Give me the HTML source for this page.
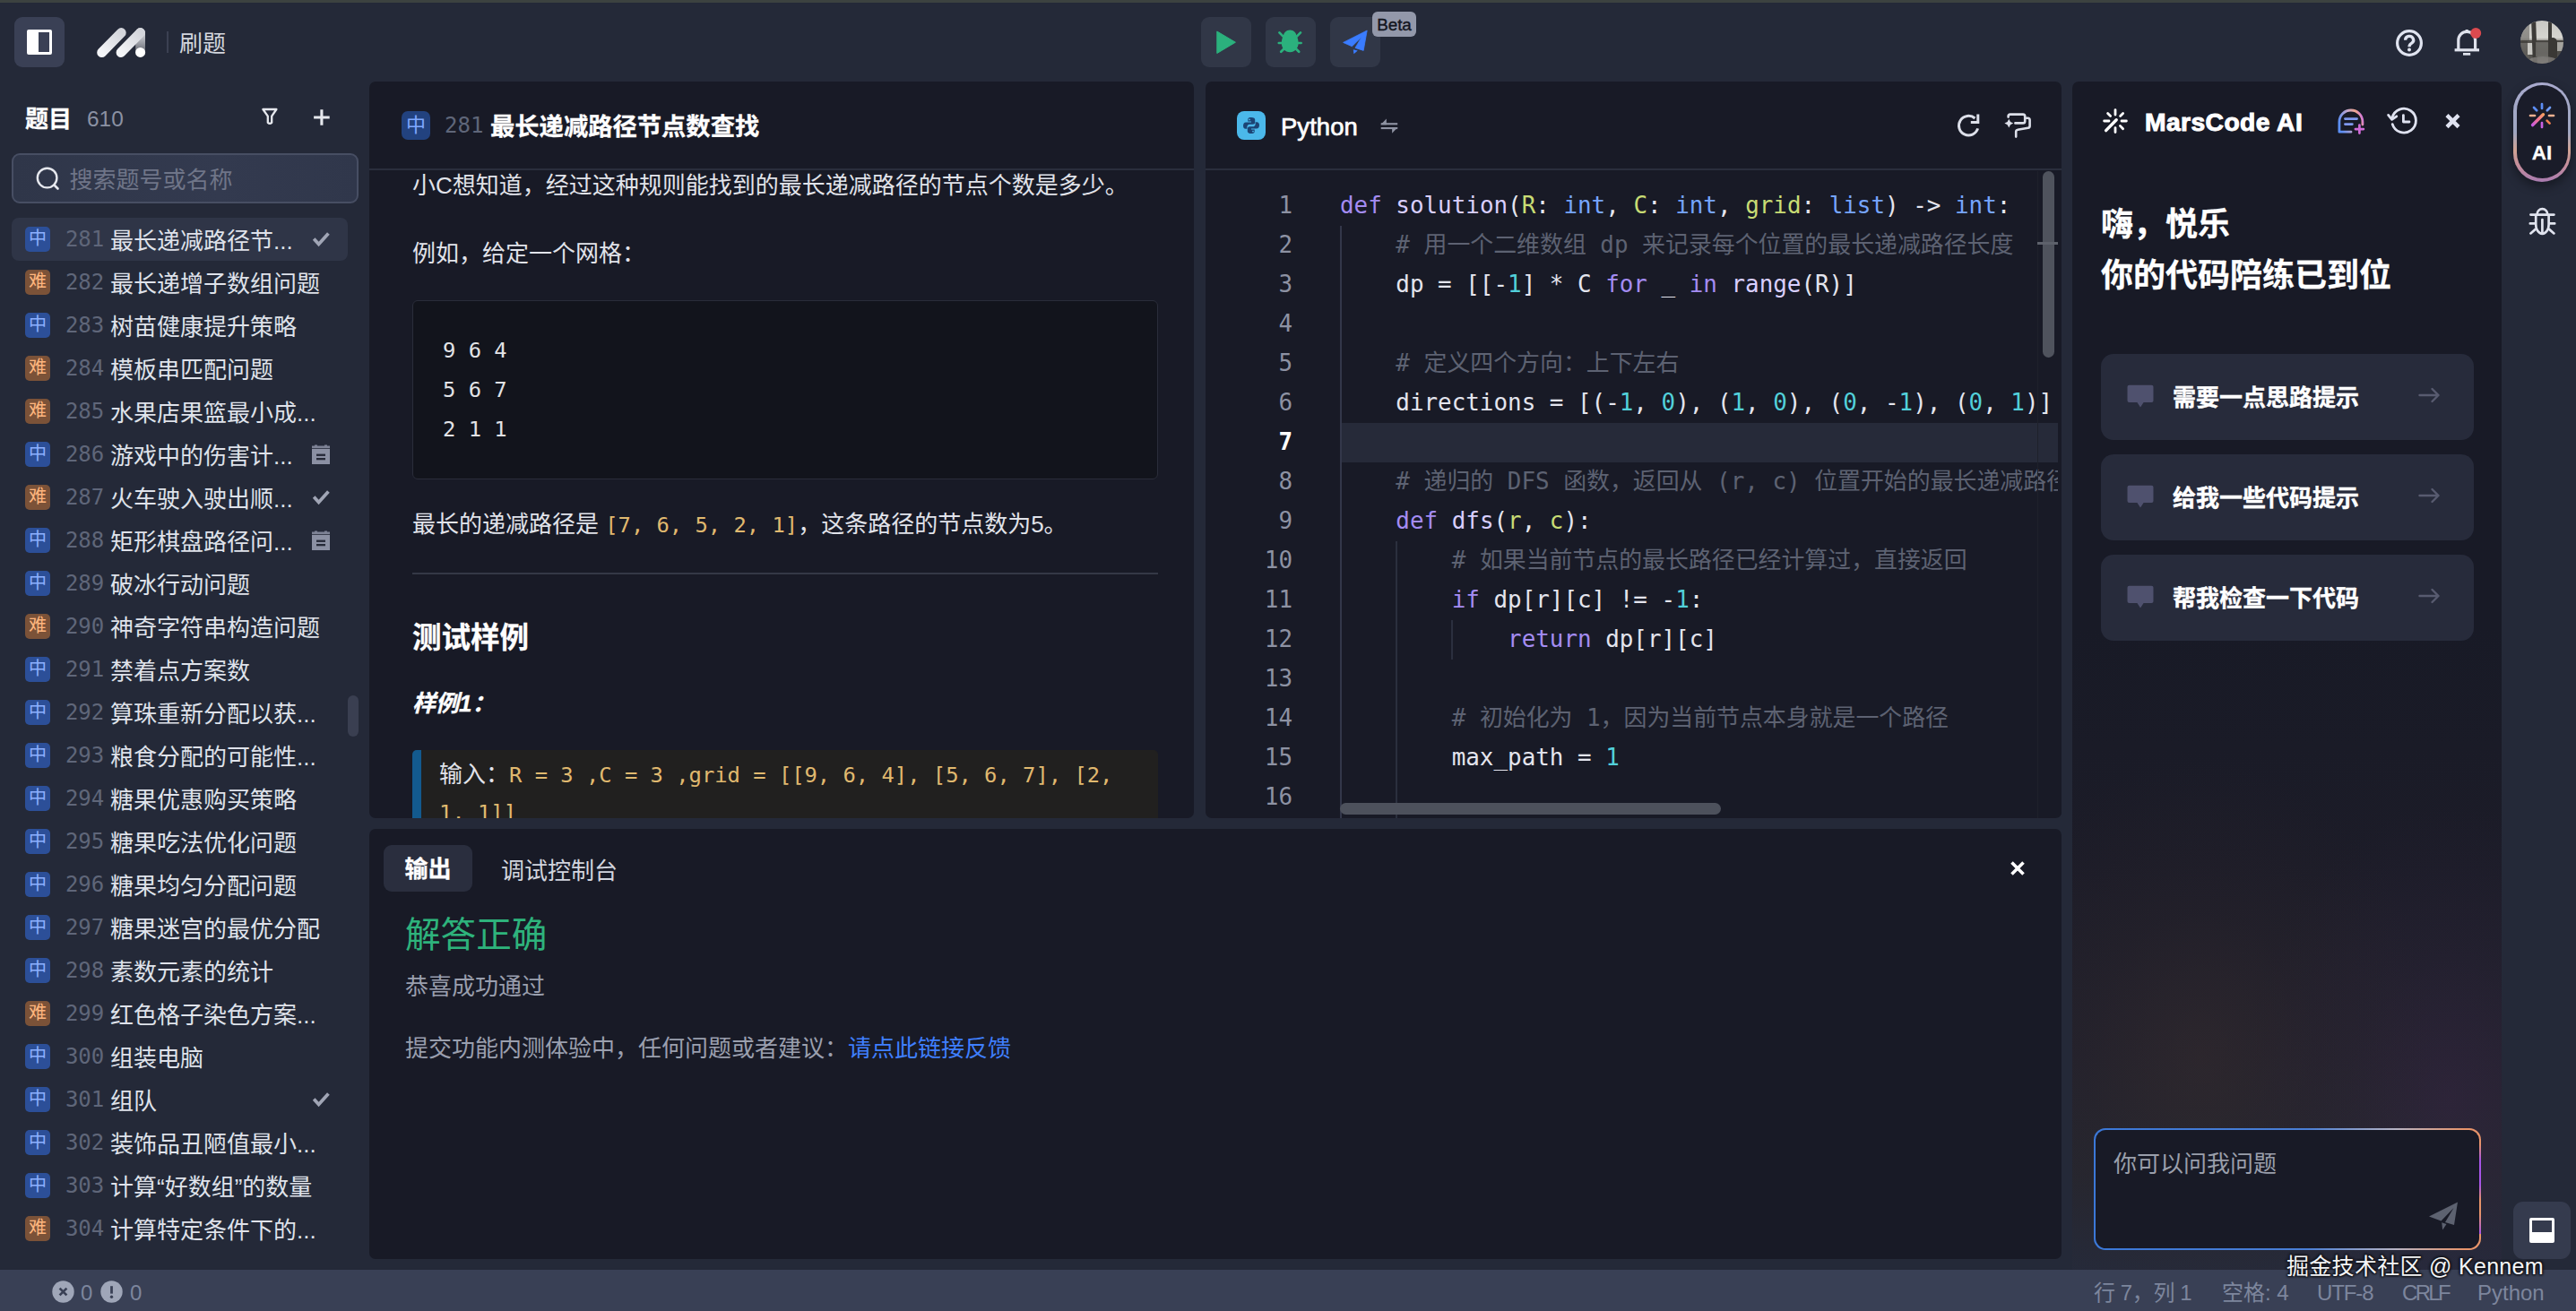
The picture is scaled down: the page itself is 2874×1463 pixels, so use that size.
<!DOCTYPE html>
<html lang="zh-CN">
<head>
<meta charset="utf-8">
<title>刷题 - MarsCode</title>
<style>

*{box-sizing:border-box;margin:0;padding:0}
html,body{width:2874px;height:1463px;overflow:hidden;background:#242938}
body{position:relative;font-family:"Liberation Sans", "Noto Sans CJK SC", sans-serif;color:#e6e8ee;font-size:26px;line-height:1}
.abs{position:absolute}
.panel{position:absolute;background:#181a26;border-radius:7px;overflow:hidden}
.mono{font-family:"DejaVu Sans Mono", "Liberation Mono", "Noto Sans CJK SC", monospace}
.b{font-weight:700;-webkit-text-stroke:.3px currentColor}
.tbtn{position:absolute;top:19px;width:56px;height:56px;border-radius:9px;background:#313747}
.row{position:absolute;left:13px;width:375px;height:48px;border-radius:8px}
.row .bd{position:absolute;left:15px;top:10px;width:28px;height:28px;border-radius:5px;font-size:20px;line-height:27px;text-align:center}
.bd.m{background:#2c4f98;color:#8db0ff}
.bd.h{background:#7b5238;color:#ffb67e}
.row .no{position:absolute;left:60px;top:0.5px;line-height:47px;font-size:24px;color:#5f6679;font-family:"DejaVu Sans Mono", "Liberation Mono", "Noto Sans CJK SC", monospace;letter-spacing:-0.1px}
.row .tt{position:absolute;left:110px;top:3px;line-height:46px;font-size:26px;color:#dfe2ea;white-space:nowrap}
.row svg{position:absolute}
.cl{position:absolute;left:0;width:955px;height:44px;white-space:pre;font-family:"DejaVu Sans Mono", "Liberation Mono", "Noto Sans CJK SC", monospace;font-size:25.9px;line-height:44px;color:#e4e5ee}
.cl .ln{position:absolute;left:0;width:97px;text-align:right;color:#8d92a3}
.cl .tx{position:absolute;left:150px}
.k{color:#a48cf2} .f{color:#d9cfff} .p{color:#c8dc74} .t{color:#76a5ff} .n{color:#52d0da} .c{color:#5d6272}
.card{position:absolute;left:32px;width:416px;height:96px;border-radius:14px;background:#272b3b}
.card .tx{position:absolute;left:80px;top:0;line-height:99px;font-size:26px;font-weight:700;color:#fff;-webkit-text-stroke:.4px #fff}
.st{position:absolute;top:1417px;height:46px;line-height:51px;font-size:24px;color:#7d869d;white-space:nowrap}

</style>
</head>
<body>
<!-- top strip -->
<div class="abs" style="left:0;top:0;width:2874px;height:3px;background:#3c4240"></div>

<!-- ================= TOP BAR ================= -->
<div class="abs" style="left:16px;top:19px;width:56px;height:56px;border-radius:9px;background:#3a4055">
  <div class="abs" style="left:14px;top:14px;width:28px;height:28px;border:3px solid #fff;border-left-width:13px;border-radius:2px"></div>
</div>
<svg class="abs" style="left:104px;top:26px" width="64" height="44" viewBox="104 26 64 44">
  <defs>
    <linearGradient id="lg1" x1="0" y1="1" x2="1" y2="0"><stop offset="0" stop-color="#f4f5f8"/><stop offset="1" stop-color="#d3d5db"/></linearGradient>
    <linearGradient id="lg2" gradientUnits="userSpaceOnUse" x1="156" y1="34" x2="156" y2="60"><stop offset="0" stop-color="#d6d7dc"/><stop offset=".35" stop-color="#b4b6bd"/><stop offset="1" stop-color="#5e616a"/></linearGradient>
  </defs>
  <line x1="156.6" y1="36.5" x2="156.6" y2="58" stroke="url(#lg2)" stroke-width="10.8" stroke-linecap="round"/>
  <line x1="113.6" y1="58.6" x2="135.3" y2="36.5" stroke="url(#lg1)" stroke-width="10.8" stroke-linecap="round"/>
  <line x1="135" y1="58.6" x2="156.6" y2="36.5" stroke="url(#lg1)" stroke-width="10.8" stroke-linecap="round"/>
  <circle cx="156.6" cy="58.4" r="5.5" fill="#fff"/>
</svg>
<div class="abs" style="left:186px;top:35px;width:2px;height:24px;background:#3b4052"></div>
<div class="abs" style="left:200px;top:32px;font-size:26px;line-height:34px;color:#d3d6de">刷题</div>

<!-- run / debug / submit -->
<div class="tbtn" style="left:1340px"><svg class="abs" style="left:16px;top:14px" width="24" height="28" viewBox="1356 33 24 28"><path d="M1357.8 35 L1378.4 47.2 L1357.8 59.5 Z" fill="#2bb17d" stroke="#2bb17d" stroke-width="1" stroke-linejoin="round"/></svg></div>
<div class="tbtn" style="left:1412px"><svg class="abs" style="left:12px;top:12px" width="32" height="32" viewBox="1424 31 32 32">
  <g fill="none" stroke="#2bb17d" stroke-width="2.7" stroke-linecap="round"><path d="M1432.6 41.6 L1427.4 36.4 M1445.8 41.6 L1451 36.4 M1431.5 48 H1426.8 M1447 48 H1451.6 M1433 54 L1429.2 57.8 M1445.4 54 L1449.2 57.8"/></g>
  <path d="M1439.2 33.6 C1443.6 33.6 1446 36.6 1446.6 40.2 C1448 42.6 1448.6 45.4 1448.6 48 C1448.6 54 1444.6 58.2 1439.2 58.2 C1433.8 58.2 1429.8 54 1429.8 48 C1429.8 45.4 1430.4 42.6 1431.8 40.2 C1432.4 36.6 1434.8 33.6 1439.2 33.6 Z" fill="#2bb17d"/>
</svg></div>
<div class="tbtn" style="left:1484px"><svg class="abs" style="left:12px;top:12px" width="32" height="32" viewBox="1496 31 32 32">
  <path d="M1498.6 47.4 L1525.2 34 L1521.2 56.4 L1512 53.4 L1519 41.5 L1508.4 51.8 Z" fill="#3a7cff" stroke="#3a7cff" stroke-width=".8" stroke-linejoin="round"/>
  <path d="M1509.8 55.2 L1514.8 56.6 L1510.4 60.2 Z" fill="#3a7cff"/>
</svg></div>
<div class="abs" style="left:1531px;top:13px;width:49px;height:28px;border-radius:6px;background:#9398aa;color:#14161f;font-size:18.8px;line-height:30px;-webkit-text-stroke:.4px #14161f;text-align:center">Beta</div>

<!-- right icons -->
<svg class="abs" style="left:2668px;top:28px" width="40" height="40" viewBox="2668 28 40 40">
  <circle cx="2688" cy="48" r="13.4" fill="none" stroke="#e0e4f0" stroke-width="3.2"/>
  <path d="M2683.6 44.8 A4.5 4.3 0 1 1 2690.4 48.4 C2688.6 49.5 2688 50.3 2688 52.2" fill="none" stroke="#e0e4f0" stroke-width="3.3"/>
  <circle cx="2688" cy="55.6" r="2" fill="#e0e4f0"/>
</svg>
<svg class="abs" style="left:2730px;top:26px" width="44" height="44" viewBox="2730 26 44 44">
  <path d="M2742.8 55.6 V45 A9.4 9.6 0 0 1 2761.6 45 V55.6" fill="none" stroke="#dfe2ec" stroke-width="3.2"/>
  <path d="M2738.6 55.8 H2766" stroke="#dfe2ec" stroke-width="3.2"/>
  <rect x="2750.6" y="33" width="3.2" height="3" fill="#dfe2ec"/>
  <rect x="2748" y="59" width="8.2" height="2.7" fill="#dfe2ec"/>
  <circle cx="2762.2" cy="37" r="6" fill="#dc4a4f"/>
</svg>
<div class="abs" style="left:2812px;top:23px;width:48px;height:48px;border-radius:50%;overflow:hidden;background:linear-gradient(180deg,#c9c8c3 0,#d6d5d0 40%,#8f8d88 47%,#55534f 52%,#4a4845 75%,#6a6864 100%)">
  <div class="abs" style="left:0;top:0;width:10px;height:48px;background:linear-gradient(180deg,#8a8884 0,#5a5854 100%);opacity:.75"></div>
  <div class="abs" style="left:8px;top:23px;width:7px;height:15px;background:#c9c8c3"></div>
  <div class="abs" style="left:13px;top:0;width:4.6px;height:48px;background:#3d3b38;transform:rotate(-2deg)"></div>
  <div class="abs" style="left:30.5px;top:0;width:4.4px;height:48px;background:#3b3936"></div>
  <div class="abs" style="left:0;top:21.5px;width:48px;height:3px;background:#3f3d3a;opacity:.85"></div>
  <div class="abs" style="left:17px;top:24px;width:14px;height:16px;background:#75736f;opacity:.7"></div>
  <div class="abs" style="left:31px;top:19px;width:10px;height:26px;border-radius:5px 5px 0 0;background:#3a3835"></div>
  <div class="abs" style="left:41px;top:24px;width:7px;height:10px;background:#b9b8b3;opacity:.8"></div>
  <div class="abs" style="left:10px;top:40px;width:30px;height:8px;background:#8a8884;opacity:.7;border-radius:50%"></div>
</div>

<!-- ================= SIDEBAR ================= -->
<div class="abs b" style="left:28px;top:115px;font-size:26px;line-height:36px;color:#fff">题目</div>
<div class="abs" style="left:97px;top:115px;font-size:24.4px;line-height:36px;color:#8b91a3">610</div>
<svg class="abs" style="left:289px;top:118px" width="24" height="24" viewBox="289 118 24 24"><path d="M293.4 122 H308.4 L303.2 129.6 V136.8 Q301 138.6 298.8 136.8 V129.6 Z" fill="none" stroke="#e6e8ee" stroke-width="2.3" stroke-linejoin="round"/></svg>
<svg class="abs" style="left:349px;top:121px" width="20" height="20" viewBox="0 0 20 20"><path d="M9.9 1.2 V18.8 M1.1 10 H18.7" stroke="#e6e8ee" stroke-width="3.1"/></svg>
<div class="abs" style="left:12.5px;top:171px;width:387px;height:55.5px;border-radius:9px;background:linear-gradient(90deg,#2f3649 0,#333a4f 60%,#30374b 100%);border:2px solid #474e63">
  <svg class="abs" style="left:24.5px;top:12px" width="30" height="30" viewBox="0 0 30 30"><circle cx="13.6" cy="13.6" r="10.8" fill="none" stroke="#e6e8ee" stroke-width="2.4"/><path d="M21.5 21.5 L25.5 25.5" stroke="#e6e8ee" stroke-width="2.6" stroke-linecap="round"/></svg>
  <div class="abs" style="left:63px;top:9px;font-size:26px;line-height:38px;color:#6f7588;white-space:nowrap">搜索题号或名称</div>
</div>
<div class="row" style="top:243px;background:#2f3547"><span class="bd m">中</span><span class="no">281</span><span class="tt">最长递减路径节...</span><svg style="left:334px;top:14px" width="22" height="20" viewBox="0 0 22 20"><path d="M3.2 9.6 L8.6 15.6 L19.4 3.6" fill="none" stroke="#a0a5b5" stroke-width="3.7" stroke-linecap="butt" stroke-linejoin="miter"/></svg></div>
<div class="row" style="top:291px"><span class="bd h">难</span><span class="no">282</span><span class="tt">最长递增子数组问题</span></div>
<div class="row" style="top:339px"><span class="bd m">中</span><span class="no">283</span><span class="tt">树苗健康提升策略</span></div>
<div class="row" style="top:387px"><span class="bd h">难</span><span class="no">284</span><span class="tt">模板串匹配问题</span></div>
<div class="row" style="top:435px"><span class="bd h">难</span><span class="no">285</span><span class="tt">水果店果篮最小成...</span></div>
<div class="row" style="top:483px"><span class="bd m">中</span><span class="no">286</span><span class="tt">游戏中的伤害计...</span><svg style="left:333px;top:12px" width="24" height="24" viewBox="0 0 24 24"><path d="M2 6 H22 V23 H2 Z" fill="#8b90a3"/><path d="M2 2.6 H5 V1.4 H8 V2.6 H16 V1.4 H19 V2.6 H22 V5.2 H2 Z" fill="#7d8295"/><rect x="7" y="11.6" width="10" height="2.3" fill="#252937"/><rect x="7" y="16" width="10" height="2.3" fill="#252937"/></svg></div>
<div class="row" style="top:531px"><span class="bd h">难</span><span class="no">287</span><span class="tt">火车驶入驶出顺...</span><svg style="left:334px;top:14px" width="22" height="20" viewBox="0 0 22 20"><path d="M3.2 9.6 L8.6 15.6 L19.4 3.6" fill="none" stroke="#a0a5b5" stroke-width="3.7" stroke-linecap="butt" stroke-linejoin="miter"/></svg></div>
<div class="row" style="top:579px"><span class="bd m">中</span><span class="no">288</span><span class="tt">矩形棋盘路径问...</span><svg style="left:333px;top:12px" width="24" height="24" viewBox="0 0 24 24"><path d="M2 6 H22 V23 H2 Z" fill="#8b90a3"/><path d="M2 2.6 H5 V1.4 H8 V2.6 H16 V1.4 H19 V2.6 H22 V5.2 H2 Z" fill="#7d8295"/><rect x="7" y="11.6" width="10" height="2.3" fill="#252937"/><rect x="7" y="16" width="10" height="2.3" fill="#252937"/></svg></div>
<div class="row" style="top:627px"><span class="bd m">中</span><span class="no">289</span><span class="tt">破冰行动问题</span></div>
<div class="row" style="top:675px"><span class="bd h">难</span><span class="no">290</span><span class="tt">神奇字符串构造问题</span></div>
<div class="row" style="top:723px"><span class="bd m">中</span><span class="no">291</span><span class="tt">禁着点方案数</span></div>
<div class="row" style="top:771px"><span class="bd m">中</span><span class="no">292</span><span class="tt">算珠重新分配以获...</span></div>
<div class="row" style="top:819px"><span class="bd m">中</span><span class="no">293</span><span class="tt">粮食分配的可能性...</span></div>
<div class="row" style="top:867px"><span class="bd m">中</span><span class="no">294</span><span class="tt">糖果优惠购买策略</span></div>
<div class="row" style="top:915px"><span class="bd m">中</span><span class="no">295</span><span class="tt">糖果吃法优化问题</span></div>
<div class="row" style="top:963px"><span class="bd m">中</span><span class="no">296</span><span class="tt">糖果均匀分配问题</span></div>
<div class="row" style="top:1011px"><span class="bd m">中</span><span class="no">297</span><span class="tt">糖果迷宫的最优分配</span></div>
<div class="row" style="top:1059px"><span class="bd m">中</span><span class="no">298</span><span class="tt">素数元素的统计</span></div>
<div class="row" style="top:1107px"><span class="bd h">难</span><span class="no">299</span><span class="tt">红色格子染色方案...</span></div>
<div class="row" style="top:1155px"><span class="bd m">中</span><span class="no">300</span><span class="tt">组装电脑</span></div>
<div class="row" style="top:1203px"><span class="bd m">中</span><span class="no">301</span><span class="tt">组队</span><svg style="left:334px;top:14px" width="22" height="20" viewBox="0 0 22 20"><path d="M3.2 9.6 L8.6 15.6 L19.4 3.6" fill="none" stroke="#a0a5b5" stroke-width="3.7" stroke-linecap="butt" stroke-linejoin="miter"/></svg></div>
<div class="row" style="top:1251px"><span class="bd m">中</span><span class="no">302</span><span class="tt">装饰品丑陋值最小...</span></div>
<div class="row" style="top:1299px"><span class="bd m">中</span><span class="no">303</span><span class="tt">计算“好数组”的数量</span></div>
<div class="row" style="top:1347px"><span class="bd h">难</span><span class="no">304</span><span class="tt">计算特定条件下的...</span></div>
<div class="abs" style="left:388px;top:776px;width:12px;height:46px;border-radius:6px;background:#3a3f51"></div>

<!-- ================= PROBLEM PANEL ================= -->
<div class="panel" style="left:412px;top:91px;width:920px;height:822px">
  <div class="abs" style="left:0;top:0;width:920px;height:99px;border-bottom:2px solid #2a2e3c"></div>
  <div class="abs" style="left:36px;top:33px;width:32px;height:32px;border-radius:7px;background:#22427f;color:#7fa8ff;font-size:22px;line-height:31px;text-align:center">中</div>
  <div class="abs mono" style="left:84px;top:31px;font-size:24px;line-height:36px;color:#5f6679">281</div>
  <div class="abs b" style="left:135px;top:31px;font-size:27.3px;line-height:40px;color:#fff;white-space:nowrap">最长递减路径节点数查找</div>

  <div class="abs" style="left:0;top:100px;width:920px;height:722px;overflow:hidden">
    <div class="abs" style="left:48px;top:-4px;font-size:26px;line-height:40px;color:#e1e3ea;white-space:nowrap">小C想知道，经过这种规则能找到的最长递减路径的节点个数是多少。</div>
    <div class="abs" style="left:48px;top:72px;font-size:26px;line-height:40px;color:#e1e3ea;white-space:nowrap">例如，给定一个网格：</div>
    <div class="abs" style="left:48px;top:144px;width:832px;height:200px;border-radius:6px;background:#12141c;border:1.5px solid #2a2d3a">
      <pre class="abs mono" style="left:33px;top:34px;font-size:23.8px;line-height:43.8px;color:#e2e3e6">9 6 4
5 6 7
2 1 1</pre>
    </div>
    <div class="abs" style="left:48px;top:374px;font-size:26px;line-height:40px;color:#e1e3ea;white-space:nowrap">最长的递减路径是 <span class="mono" style="font-size:23.8px;color:#e0b96f">[7, 6, 5, 2, 1]</span>，这条路径的节点数为5。</div>
    <div class="abs" style="left:48px;top:448px;width:832px;height:2px;background:#343846"></div>
    <div class="abs b" style="left:48px;top:497px;font-size:32.5px;line-height:48px;color:#fff;white-space:nowrap">测试样例</div>
    <div class="abs b" style="left:48px;top:574px;font-size:26px;line-height:40px;color:#fff;white-space:nowrap;font-style:italic">样例1：</div>
    <div class="abs" style="left:48px;top:646px;width:832px;height:130px;background:#21201f;border-left:10px solid #135a8e;border-radius:5px 5px 0 0">
      <div class="abs" style="left:20px;top:7px;width:790px;font-size:26px;line-height:41.4px;color:#e1e3ea">输入：<span class="mono" style="font-size:23.8px;color:#e0b96f">R = 3 ,C = 3 ,grid = [[9, 6, 4], [5, 6, 7], [2, 1, 1]]</span></div>
    </div>
  </div>
</div>

<!-- ================= EDITOR PANEL ================= -->
<div class="panel" style="left:1345px;top:91px;width:955px;height:822px">
  <div class="abs" style="left:0;top:0;width:955px;height:99px;border-bottom:2px solid #2a2e3c"></div>
  <div class="abs" style="left:35px;top:33px;width:32px;height:32px;border-radius:8px;background:#4bb8ea">
    <svg class="abs" style="left:6px;top:6px" width="20" height="20" viewBox="0 0 20 20">
      <path d="M9.8 1 C6.6 1 6.3 2.4 6.3 3.6 V5.6 H10 V6.4 H4 C2.2 6.4 1 7.8 1 10.2 C1 12.6 2.1 13.8 3.7 13.8 H5.4 V11.6 C5.4 10 6.7 8.7 8.3 8.7 H11.9 C13.2 8.7 14.2 7.7 14.2 6.4 V3.6 C14.2 2.2 13 1 9.8 1 Z" fill="#1c4474"/>
      <path d="M10.2 19 C13.4 19 13.7 17.6 13.7 16.4 V14.4 H10 V13.6 H16 C17.8 13.6 19 12.2 19 9.8 C19 7.4 17.9 6.2 16.3 6.2 H14.6 V8.4 C14.6 10 13.3 11.3 11.7 11.3 H8.1 C6.8 11.3 5.8 12.3 5.8 13.6 V16.4 C5.8 17.8 7 19 10.2 19 Z" fill="#1c4474"/>
      <circle cx="8" cy="3.4" r="0.9" fill="#4bb8ea"/><circle cx="12" cy="16.6" r="0.9" fill="#4bb8ea"/>
    </svg>
  </div>
  <div class="abs" style="left:84px;top:31px;font-size:27.4px;line-height:40px;color:#fff;white-space:nowrap;-webkit-text-stroke:0.7px #fff;letter-spacing:0.1px">Python</div>
  <svg class="abs" style="left:190px;top:34px" width="30" height="30" viewBox="1535 125 30 30"><g fill="#8f93a3"><rect x="1540.7" y="137.2" width="18.5" height="2.1"/><path d="M1540.4 139.3 L1546.8 132.6 V139.3 Z"/><rect x="1540.7" y="142" width="18.5" height="2.1"/><path d="M1559.5 142 L1553.1 148.7 V142 Z"/></g></svg>
  <svg class="abs" style="left:835px;top:29px" width="40" height="40" viewBox="2180 120 40 40"><path d="M2206.6 143.4 A10.8 10.8 0 1 1 2203.4 132" fill="none" stroke="#dcdfe9" stroke-width="3"/><path d="M2206.8 127.6 V136.4 H2198.8" fill="none" stroke="#dcdfe9" stroke-width="3"/></svg>
  <svg class="abs" style="left:888px;top:29px" width="40" height="40" viewBox="2233 120 40 40">
    <path d="M2240.6 130.6 V129.8 Q2240.6 127.6 2242.8 127.6 H2257 Q2259.2 127.6 2259.2 129.8 V135.2 Q2259.2 137.4 2257 137.4 H2248.4" fill="none" stroke="#dcdfe9" stroke-width="2.6" stroke-linecap="round"/>
    <path d="M2259.2 131.8 H2262.4 Q2264.6 131.8 2264.6 134 V140.4 Q2264.6 142.4 2262.6 142.7 L2251.2 144.7 Q2249.2 145 2249.2 147 V152.6" fill="none" stroke="#dcdfe9" stroke-width="2.6" stroke-linecap="round"/>
    <path d="M2241.3 132.8 L2243 136 L2246.2 137.6 L2243 139.2 L2241.3 142.6 L2239.6 139.2 L2236.4 137.6 L2239.6 136 Z" fill="#dcdfe9"/>
  </svg>

  <div class="abs" style="left:0;top:100px;width:955px;height:722px;overflow:hidden">
    <!-- current line -->
    <div class="abs" style="left:150px;top:281px;width:801px;height:44px;background:#262a39;border-left:1.5px solid #3a3e4e"></div>
    <!-- indent guides -->
    <div class="abs" style="left:150px;top:61px;width:1.5px;height:661px;background:#33374a"></div>
    <div class="abs" style="left:212px;top:413px;width:1.5px;height:309px;background:#2b2f3e"></div>
    <div class="abs" style="left:274px;top:501px;width:1.5px;height:44px;background:#2b2f3e"></div>
<div class="cl" style="top:16px"><span class="ln">1</span><span class="tx"><span class="k">def</span> <span class="f">solution</span>(<span class="p">R</span>: <span class="t">int</span>, <span class="p">C</span>: <span class="t">int</span>, <span class="p">grid</span>: <span class="t">list</span>) -&gt; <span class="t">int</span>:</span></div>
<div class="cl" style="top:60px"><span class="ln">2</span><span class="tx">    <span class="c"># 用一个二维数组 dp 来记录每个位置的最长递减路径长度</span></span></div>
<div class="cl" style="top:104px"><span class="ln">3</span><span class="tx">    dp = [[-<span class="n">1</span>] * C <span class="k">for</span> _ <span class="k">in</span> <span class="f">range</span>(R)]</span></div>
<div class="cl" style="top:148px"><span class="ln">4</span><span class="tx"></span></div>
<div class="cl" style="top:192px"><span class="ln">5</span><span class="tx">    <span class="c"># 定义四个方向：上下左右</span></span></div>
<div class="cl" style="top:236px"><span class="ln">6</span><span class="tx">    directions = [(-<span class="n">1</span>, <span class="n">0</span>), (<span class="n">1</span>, <span class="n">0</span>), (<span class="n">0</span>, -<span class="n">1</span>), (<span class="n">0</span>, <span class="n">1</span>)]</span></div>
<div class="cl" style="top:280px"><span class="ln" style="color:#fff;font-weight:700">7</span><span class="tx"></span></div>
<div class="cl" style="top:324px"><span class="ln">8</span><span class="tx">    <span class="c"># 递归的 DFS 函数，返回从 (r, c) 位置开始的最长递减路径长度</span></span></div>
<div class="cl" style="top:368px"><span class="ln">9</span><span class="tx">    <span class="k">def</span> <span class="f">dfs</span>(<span class="p">r</span>, <span class="p">c</span>):</span></div>
<div class="cl" style="top:412px"><span class="ln">10</span><span class="tx">        <span class="c"># 如果当前节点的最长路径已经计算过，直接返回</span></span></div>
<div class="cl" style="top:456px"><span class="ln">11</span><span class="tx">        <span class="k">if</span> dp[r][c] != -<span class="n">1</span>:</span></div>
<div class="cl" style="top:500px"><span class="ln">12</span><span class="tx">            <span class="k">return</span> dp[r][c]</span></div>
<div class="cl" style="top:544px"><span class="ln">13</span><span class="tx"></span></div>
<div class="cl" style="top:588px"><span class="ln">14</span><span class="tx">        <span class="c"># 初始化为 1，因为当前节点本身就是一个路径</span></span></div>
<div class="cl" style="top:632px"><span class="ln">15</span><span class="tx">        max_path = <span class="n">1</span></span></div>
<div class="cl" style="top:676px"><span class="ln">16</span><span class="tx"></span></div>
    <!-- scrollbars -->
    <div class="abs" style="left:951px;top:0;width:4px;height:722px;background:#181a26"></div>
    <div class="abs" style="left:927.5px;top:0;width:1.5px;height:722px;background:#1e212b"></div>
    <div class="abs" style="left:933.5px;top:0;width:13.5px;height:208px;border-radius:7px;background:#4f535d"></div>
    <div class="abs" style="left:928px;top:78.5px;width:23px;height:3px;background:#5d616b"></div>
    <div class="abs" style="left:150px;top:705px;width:425px;height:13px;border-radius:6.5px;background:#4d515c"></div>
  </div>
</div>

<!-- ================= OUTPUT PANEL ================= -->
<div class="panel" style="left:412px;top:925px;width:1888px;height:480px">
  <div class="abs b" style="left:16px;top:18px;width:99px;height:52px;border-radius:9px;background:#2a2e3e;color:#fff;font-size:26px;line-height:55px;text-align:center">输出</div>
  <div class="abs" style="left:147px;top:20.5px;font-size:26px;line-height:52px;color:#d2d5de;white-space:nowrap">调试控制台</div>
  <svg class="abs" style="left:1830px;top:35px" width="18" height="18" viewBox="0 0 18 18"><path d="M2.5 2.5 L15.5 15.5 M15.5 2.5 L2.5 15.5" stroke="#fff" stroke-width="3.6" stroke-linecap="butt"/></svg>
  <div class="abs" style="left:40px;top:89.5px;font-size:39.6px;line-height:56px;color:#2eb37c;white-space:nowrap">解答正确</div>
  <div class="abs" style="left:40px;top:156px;font-size:26px;line-height:40px;color:#9a9fae;white-space:nowrap">恭喜成功通过</div>
  <div class="abs" style="left:40px;top:225px;font-size:26px;line-height:40px;color:#9a9fae;white-space:nowrap">提交功能内测体验中，任何问题或者建议：<span style="color:#3f7fff">请点此链接反馈</span></div>
</div>

<!-- ================= AI PANEL ================= -->
<div class="abs" style="left:2312px;top:91px;width:479px;height:1326px;border-radius:7px 7px 0 0;overflow:hidden;background:linear-gradient(180deg,#181a26 0,#181a26 46%,#1c1c28 66%,#22212c 82%,#25262f 92%,#252a3a 100%)">
  <div class="abs" style="left:0;top:700px;width:479px;height:626px;background:radial-gradient(ellipse 260px 330px at 30% 62%,rgba(58,46,46,.42) 0,rgba(50,40,44,.2) 50%,rgba(40,36,50,0) 100%),radial-gradient(ellipse 230px 330px at 88% 70%,rgba(58,38,72,.42) 0,rgba(50,38,66,.2) 50%,rgba(40,36,60,0) 100%)"></div>
  <svg class="abs" style="left:28px;top:24px" width="40" height="40" viewBox="2340 115 40 40"><g stroke="#fff" stroke-width="2.8" stroke-linecap="round"><path d="M2360 122.6 V128 M2360 142.6 V147.6 M2347.6 135 H2353 M2367 135 H2372.4 M2351.6 126.6 L2354.6 129.6 M2368.6 126.4 L2365.6 129.4 M2365.4 140.4 L2368.6 143.8"/><path d="M2361.2 133.8 L2349.6 145.6" stroke-width="3.4"/></g></svg>
  <div class="abs b" style="left:81px;top:23px;font-size:28.2px;line-height:44px;color:#fff;white-space:nowrap;letter-spacing:.45px;-webkit-text-stroke:1px #fff">MarsCode AI</div>
  <svg class="abs" style="left:290px;top:24px" width="40" height="40" viewBox="2602 115 40 40">
    <defs><linearGradient id="ng" x1="0" y1="0.6" x2="1" y2="0.3"><stop offset="0" stop-color="#5b8ff5"/><stop offset=".5" stop-color="#c7a6c8"/><stop offset=".8" stop-color="#f0a58a"/><stop offset="1" stop-color="#d277e0"/></linearGradient></defs>
    <path d="M2623 147.2 H2609.9 V136 A13 13 0 0 1 2622.9 123 A13 13 0 0 1 2635.9 136 V139" fill="none" stroke="url(#ng)" stroke-width="2.8" stroke-linecap="round" stroke-linejoin="round"/>
    <path d="M2616.4 132.6 H2629.6 M2616.4 138.6 H2624.4" stroke="#7f98ee" stroke-width="2.7" stroke-linecap="round"/>
    <path d="M2632.4 139.6 V148.6 M2627.9 144.1 H2636.9" stroke="#d06bd8" stroke-width="2.7" stroke-linecap="round"/>
  </svg>
  <svg class="abs" style="left:348px;top:24px" width="40" height="40" viewBox="2660 115 40 40">
    <path d="M2669 131.4 A13.4 13.4 0 1 1 2669.2 138.6" fill="none" stroke="#dfe2f0" stroke-width="2.8" stroke-linecap="round"/>
    <path d="M2664.6 128.4 L2668.6 133.4 L2673.8 129.8" fill="none" stroke="#dfe2f0" stroke-width="2.8" stroke-linecap="round" stroke-linejoin="round"/>
    <path d="M2681.4 128.6 V136 H2688" fill="none" stroke="#dfe2f0" stroke-width="2.8" stroke-linecap="round" stroke-linejoin="round"/>
  </svg>
  <svg class="abs" style="left:414px;top:34px" width="20" height="20" viewBox="2726 125 20 20"><path d="M2730 128.6 L2743 141.6 M2743 128.6 L2730 141.6" stroke="#dfe2f0" stroke-width="4.4"/></svg>

  <div class="abs b" style="left:32px;top:131px;font-size:36px;line-height:57px;color:#fff;white-space:nowrap">嗨，悦乐<br>你的代码陪练已到位</div>

  <div class="card" style="top:303.8px"><svg class="abs" style="left:29px;top:34px" width="30" height="27" viewBox="0 0 30 27"><path d="M2.5 0.8 H27.5 Q29.5 0.8 29.5 2.8 V18 Q29.5 20 27.5 20 H18.6 L15 25.5 L11.4 20 H2.5 Q0.5 20 0.5 18 V2.8 Q0.5 0.8 2.5 0.8 Z" fill="#4f516e"/></svg><div class="tx">需要一点思路提示</div><svg class="abs" style="left:354px;top:35px" width="26" height="22" viewBox="0 0 26 22"><path d="M1.5 11 H22.5 M15.5 4 L22.5 11 L15.5 18" fill="none" stroke="#585b70" stroke-width="2.4" stroke-linecap="round" stroke-linejoin="round"/></svg></div>
  <div class="card" style="top:415.8px"><svg class="abs" style="left:29px;top:34px" width="30" height="27" viewBox="0 0 30 27"><path d="M2.5 0.8 H27.5 Q29.5 0.8 29.5 2.8 V18 Q29.5 20 27.5 20 H18.6 L15 25.5 L11.4 20 H2.5 Q0.5 20 0.5 18 V2.8 Q0.5 0.8 2.5 0.8 Z" fill="#4f516e"/></svg><div class="tx">给我一些代码提示</div><svg class="abs" style="left:354px;top:35px" width="26" height="22" viewBox="0 0 26 22"><path d="M1.5 11 H22.5 M15.5 4 L22.5 11 L15.5 18" fill="none" stroke="#585b70" stroke-width="2.4" stroke-linecap="round" stroke-linejoin="round"/></svg></div>
  <div class="card" style="top:527.8px"><svg class="abs" style="left:29px;top:34px" width="30" height="27" viewBox="0 0 30 27"><path d="M2.5 0.8 H27.5 Q29.5 0.8 29.5 2.8 V18 Q29.5 20 27.5 20 H18.6 L15 25.5 L11.4 20 H2.5 Q0.5 20 0.5 18 V2.8 Q0.5 0.8 2.5 0.8 Z" fill="#4f516e"/></svg><div class="tx">帮我检查一下代码</div><svg class="abs" style="left:354px;top:35px" width="26" height="22" viewBox="0 0 26 22"><path d="M1.5 11 H22.5 M15.5 4 L22.5 11 L15.5 18" fill="none" stroke="#585b70" stroke-width="2.4" stroke-linecap="round" stroke-linejoin="round"/></svg></div>

  <!-- input box with gradient border -->
  <div class="abs" style="left:24px;top:1168px;width:432px;height:136px;border-radius:13px;background:linear-gradient(90deg,#3b78d8 0,#4a7fd6 55%,#b7b4c4 78%,#e8946a 96%,#e8946a 100%)">
    <div class="abs" style="right:0;top:18px;width:5px;height:100px;background:linear-gradient(180deg,#e8946a 0,#a855e8 18%,#a855e8 45%,#e8946a 62%,#e8946a 78%,#a855e8 100%)"></div>
    <div class="abs" style="left:2px;top:2px;width:428px;height:132px;border-radius:11.5px;background:#181a26"></div>
    <div class="abs" style="left:22px;top:20px;font-size:26px;line-height:40px;color:#9a9fab;white-space:nowrap">你可以问我问题</div>
    <svg class="abs" style="left:373px;top:81px" width="34" height="34" viewBox="0 0 34 34"><path d="M1 17.5 L33 1.5 L29 27 L19 24 L28.5 8 L14.5 22.5 Z" fill="#5d6270"/><path d="M15.2 24.2 L20.5 26 L16.2 32.5 Z" fill="#5d6270"/></svg>
  </div>
</div>

<!-- ================= RIGHT STRIP ================= -->
<div class="abs" style="left:2804px;top:91.5px;width:64px;height:111px;border-radius:32px;background:linear-gradient(180deg,#a9aace 0,#a3a8c6 25%,#9ea5c0 50%,#cfa293 68%,#c48d9c 84%,#a97bb0 100%);box-shadow:0 5px 12px rgba(0,0,0,.4)">
  <div class="abs" style="left:3.5px;top:3.5px;width:57px;height:104px;border-radius:28.5px;background:#1a1c29"></div>
  <svg class="abs" style="left:16px;top:21.5px" width="32" height="32" viewBox="0 0 32 32">
    <defs><linearGradient id="wg" gradientUnits="userSpaceOnUse" x1="18" y1="14" x2="5" y2="27"><stop offset="0" stop-color="#f8a25e"/><stop offset=".55" stop-color="#f0709a"/><stop offset="1" stop-color="#c45ae6"/></linearGradient></defs>
    <g stroke-width="2.7" stroke-linecap="round"><path d="M16 3 V8" stroke="#5c8df5"/><path d="M7 7 L10.2 10.2" stroke="#5c8df5"/><path d="M25 7 L21.8 10.2" stroke="#6f9bf5"/><path d="M3 16 H8" stroke="#f0b090"/><path d="M24 16 H29" stroke="#f0b090"/><path d="M24.6 24.6 L21.6 21.6" stroke="#f07f50"/><path d="M16 24 V29" stroke="#c860e0"/><path d="M17.4 14.8 L5.6 26.6" stroke="url(#wg)" stroke-width="3.5"/></g>
  </svg>
  <div class="abs b" style="left:0;top:62px;width:64px;text-align:center;font-size:22.4px;line-height:34px;color:#fff">AI</div>
</div>
<svg class="abs" style="left:2816px;top:227px" width="40" height="40" viewBox="2816 227 40 40">
  <g fill="none" stroke="#e0e3ee" stroke-width="2.7" stroke-linecap="round" stroke-linejoin="round">
    <path d="M2830.6 239 A5.8 5.8 0 0 1 2842.2 239"/>
    <path d="M2823.4 239.6 H2849.4"/>
    <path d="M2829.2 240 V250.4 A7.2 10.4 0 0 0 2843.6 250.4 V240"/>
    <path d="M2836.4 245 V260.6"/>
    <path d="M2827.6 249.4 H2822.8 M2845.2 249.4 H2850.2 M2829 255.6 L2823.4 260.4 M2843.8 255.6 L2849.4 260.4"/>
  </g>
</svg>
<div class="abs" style="left:2804px;top:1341px;width:64px;height:64px;border-radius:11px;background:#353b4e">
  <div class="abs" style="left:18px;top:18px;width:28px;height:28px;border:3px solid #fff;border-bottom-width:12px;border-radius:2px"></div>
</div>

<!-- ================= STATUS BAR ================= -->
<div class="abs" style="left:0;top:1417px;width:2874px;height:46px;background:#394055"></div>
<svg class="abs" style="left:57.5px;top:1428.5px" width="25" height="25" viewBox="0 0 25 25"><circle cx="12.5" cy="12.5" r="12.2" fill="#9fa6b8"/><path d="M8.6 8.6 L16.4 16.4 M16.4 8.6 L8.6 16.4" stroke="#394055" stroke-width="2.7"/></svg>
<div class="st" style="left:90px">0</div>
<svg class="abs" style="left:111.5px;top:1428.5px" width="25" height="25" viewBox="0 0 25 25"><circle cx="12.5" cy="12.5" r="12.2" fill="#9fa6b8"/><path d="M12.5 6.2 V14.6" stroke="#394055" stroke-width="2.8"/><circle cx="12.5" cy="18.2" r="1.7" fill="#394055"/></svg>
<div class="st" style="left:145px">0</div>
<div class="st" style="left:2336px;letter-spacing:-.4px">行 7，列 1</div>
<div class="st" style="left:2479px">空格: 4</div>
<div class="st" style="left:2585px;letter-spacing:-1.1px">UTF-8</div>
<div class="st" style="left:2680px;letter-spacing:-2.7px">CRLF</div>
<div class="st" style="left:2764px">Python</div>
<div class="abs" style="left:2551px;top:1395px;font-size:25px;line-height:36px;color:#f4f5f7;white-space:nowrap;text-shadow:0 0 3px #15161c,1px 1px 2px #15161c,-1px -1px 2px #15161c,1px -1px 2px #15161c,-1px 1px 2px #15161c;letter-spacing:.3px">掘金技术社区 @ Kennem</div>
</body>
</html>
